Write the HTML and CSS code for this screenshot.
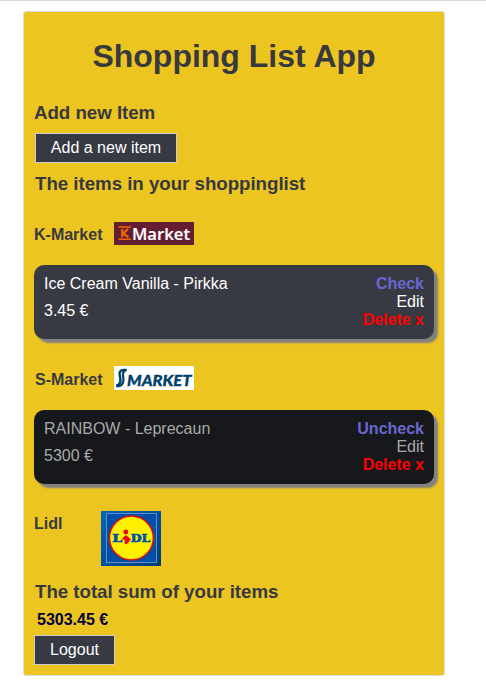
FILE: index.html
```html
<!DOCTYPE html>
<html lang="en">
<head>
<meta charset="utf-8">
<title>Shopping List App</title>
<link rel="stylesheet" href="styles.css">
</head>
<body>
<main class="app">
  <h1 class="title">Shopping List App</h1>
  <h3 class="heading">Add new Item</h3>
  <button class="btn btn-add">Add a new item</button>
  <h3 class="heading heading-list">The items in your shoppinglist</h3>

  <section class="shop">
    <header class="shop-head">
      <h4 class="shop-name">K-Market</h4>
      <svg class="logo logo-k" viewBox="0 0 80 23" role="img" aria-label="K-Market">
        <rect width="80" height="23" fill="#651d32"/>
        <path d="M4.5 4.9H17M4.5 17.3H17" stroke="#f06400" stroke-width="1.5"/>
        <path d="M8.2 7V15.3M14 7L9.3 11.1L14.4 15.3" fill="none" stroke="#f06400" stroke-width="2.3"/>
        <text x="18" y="17.6" class="k-word" textLength="58" lengthAdjust="spacingAndGlyphs">Market</text>
      </svg>
    </header>
    <article class="item">
      <div class="info"><span>Ice Cream Vanilla - Pirkka</span><span>3.45 €</span></div>
      <div class="actions"><span class="check">Check</span><span>Edit</span><span class="delete">Delete x</span></div>
    </article>
  </section>

  <section class="shop">
    <header class="shop-head shop-head-s">
      <h4 class="shop-name">S-Market</h4>
      <svg class="logo logo-s" viewBox="0 0 80 24" role="img" aria-label="S-Market">
        <rect width="80" height="24" fill="#fff"/>
        <path d="M12.6 3.9H9.2Q6 4.2 5.6 7.2Q5.4 9.2 6.2 11.5Q7 14.5 5.8 17Q5 19.2 2.2 19.6" fill="none" stroke="#00416b" stroke-width="2.4"/>
        <path d="M12.4 4Q9.2 5 9 7.6Q8.8 9.2 9.3 11.2Q10 14.2 8.8 17Q7.4 20.3 2.2 20.2" fill="none" stroke="#00416b" stroke-width="2.2"/>
        <text x="13" y="19.8" class="s-word" textLength="64.5" lengthAdjust="spacingAndGlyphs">MARKET</text>
      </svg>
    </header>
    <article class="item item-done">
      <div class="info"><span>RAINBOW - Leprecaun</span><span>5300 €</span></div>
      <div class="actions"><span class="check">Uncheck</span><span>Edit</span><span class="delete">Delete x</span></div>
    </article>
  </section>

  <section class="shop">
    <header class="shop-head shop-head-lidl">
      <h4 class="shop-name">Lidl</h4>
      <svg class="logo logo-lidl" viewBox="0 0 60 55" role="img" aria-label="Lidl">
        <defs>
          <linearGradient id="blue" x1="0" y1="0" x2="1" y2="1">
            <stop offset="0" stop-color="#0068b4"/><stop offset=".5" stop-color="#0050a0"/><stop offset="1" stop-color="#003a78"/>
          </linearGradient>
        </defs>
        <rect width="60" height="55" fill="url(#blue)"/>
        <rect x="5.5" y="2.5" width="50" height="49" fill="#0050aa" stroke="#5c90c8"/>
        <circle cx="30.4" cy="27" r="22" fill="#fff000" stroke="#e60a14" stroke-width="1.6"/>
        <text x="11.3" y="31" class="lidl-word" textLength="10" lengthAdjust="spacingAndGlyphs">L</text>
        <text x="29.7" y="31" class="lidl-word" textLength="19.5" lengthAdjust="spacingAndGlyphs">DL</text>
        <circle cx="24.8" cy="21" r="2.4" fill="#e60a14"/>
        <path d="M20.6 28L25 24L30 28.5L25.2 33.4L23 31.6L24.2 30L22.6 28.6Z" fill="#e60a14"/>
      </svg>
    </header>
  </section>

  <h3 class="heading heading-total">The total sum of your items</h3>
  <p class="total">5303.45 €</p>
  <button class="btn btn-logout">Logout</button>
</main>
</body>
</html>
```
FILE: styles.css
```css
* { box-sizing: border-box; }

body {
  margin: 0;
  border-top: 1px solid #dadada;
  background: #fff;
  color: #37393f;
  font: 16px/18px "Liberation Sans", Arial, sans-serif;
}

h1, h3, h4, p { margin: 0; }

.app {
  width: 422px;
  height: 665px;
  margin: 10px 0 0 23px;
  padding: 26px 10px 10px;
  border: 1px solid #dcdcdc;
  border-radius: 3px;
  background: #edc521;
}

.title {
  font-size: 32px;
  line-height: 36px;
  text-align: center;
}

.heading {
  margin-top: 28px;
  font-size: 18.72px;
  letter-spacing: -.03px;
  line-height: 22px;
}

.heading-list { margin: 10px 0 0 1px; }
.heading-total { margin: 15px 0 0 1px; }

.btn {
  display: block;
  height: 30px;
  padding: 0;
  border: 1px solid #ccc;
  background: #373a42;
  color: #fff;
  font: inherit;
}

.btn-add {
  width: 142px;
  margin: 9px 0 0 1px;
}

.btn-logout {
  width: 81px;
  margin-top: 6px;
}

.shop-head {
  display: flex;
  align-items: flex-start;
  height: 43px;
  margin-top: 27px;
}

.shop-name {
  width: 80px;
  padding-top: 4px;
  font-size: 16px;
}

.shop-head-s {
  height: 44px;
}

.shop-head-s .shop-name {
  padding: 5px 0 0 1px;
}

.shop-head-lidl { height: 55px; }
.shop-head-lidl .shop-name { width: 67px; }

.logo {
  display: block;
  overflow: visible;
}
.logo-k { width: 80px; height: 23px; }
.logo-s { width: 80px; height: 24px; }
.logo-lidl { width: 60px; height: 55px; }

.k-word {
  fill: #fff;
  font: 600 17px "Open Sans", sans-serif;
  stroke: #fff;
  stroke-width: .2px;
}

.s-word {
  fill: #00416b;
  stroke: #00416b;
  stroke-width: .3px;
  font: italic 900 15.5px Lato, sans-serif;
}

.lidl-word {
  fill: #0050aa;
  stroke: #0050aa;
  stroke-width: .7px;
  font: bold 11.5px "DejaVu Serif", serif;
}

.item {
  display: flex;
  justify-content: space-between;
  height: 74px;
  padding: 10px;
  border-radius: 10px;
  background: #373a42;
  box-shadow: 4px 4px 2px #808080;
  color: #fff;
}

.item-done {
  background: #16181b;
  color: #aaa;
}

.info, .actions {
  display: flex;
  flex-direction: column;
}

.info { gap: 9px; }
.actions { text-align: right; }

.check {
  color: #6a68cf;
  font-weight: bold;
}

.delete {
  color: #f00;
  font-weight: bold;
}

.total {
  margin: 8px 0 0 3px;
  color: #00003c;
  font-weight: bold;
}
```
